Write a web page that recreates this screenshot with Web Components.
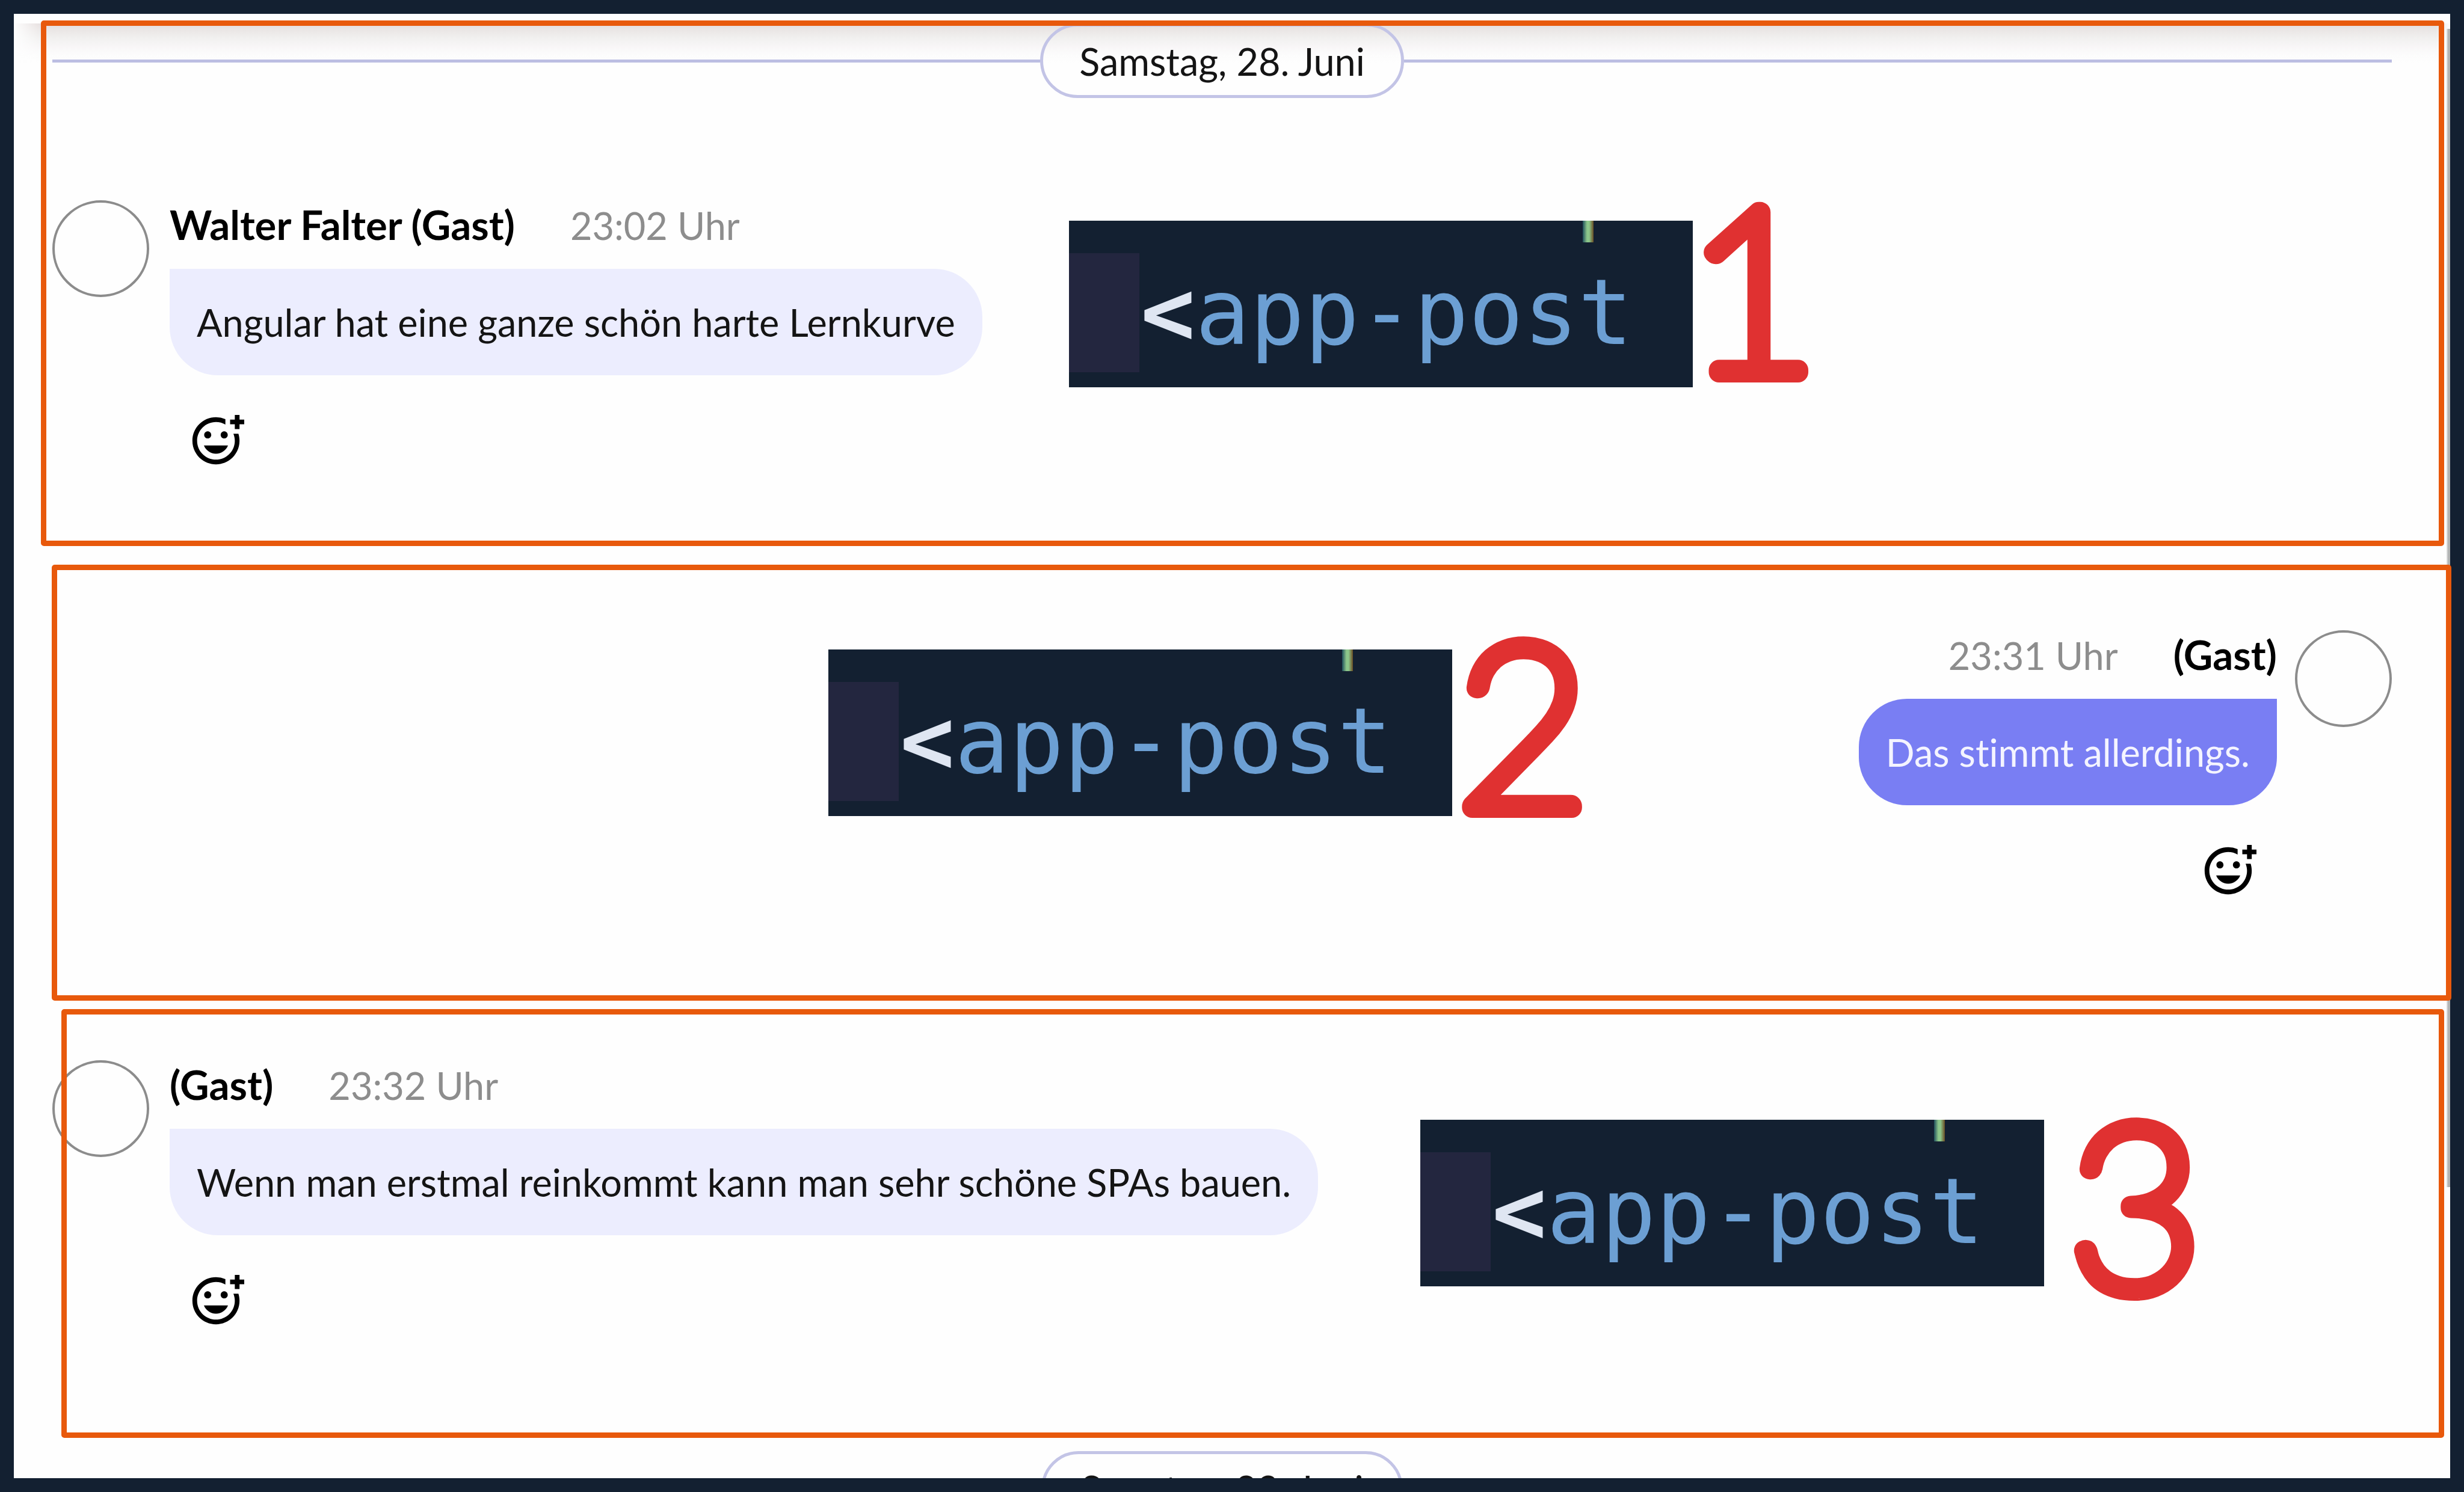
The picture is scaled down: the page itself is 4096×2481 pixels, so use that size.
<!DOCTYPE html>
<html lang="de">
<head>
<meta charset="utf-8">
<title>Chat-Verlauf</title>
<style>
  body { margin: 0; background: #132031; font: 400 63px/80px Lato, "Noto Sans", sans-serif; font-variant-ligatures: none; color: #141414; }
</style>
</head>
<body>
<chat-page>
  <day-divider>Samstag, 28. Juni</day-divider>
  <chat-post name="Walter Falter (Gast)" time="23:02 Uhr">Angular hat eine ganze schön harte Lernkurve</chat-post>
  <chat-post own name="(Gast)" time="23:31 Uhr">Das stimmt allerdings.</chat-post>
  <chat-post name="(Gast)" time="23:32 Uhr">Wenn man erstmal reinkommt kann man sehr schöne SPAs bauen.</chat-post>
  <day-divider>Sonntag, 29. Juni</day-divider>

  <note-frame slot="notes" style="left:68px;right:33px;top:34px;height:874px"></note-frame>
  <note-frame slot="notes" style="left:86px;right:21px;top:939px;height:725px"></note-frame>
  <note-frame slot="notes" style="left:102px;right:33px;top:1678px;height:713px"></note-frame>

  <code-snippet slot="notes" style="left:1777px;top:367px">app-post</code-snippet>
  <code-snippet slot="notes" style="left:1377px;top:1080px">app-post</code-snippet>
  <code-snippet slot="notes" style="left:2361px;top:1862px">app-post</code-snippet>

  <step-number slot="notes" style="left:2804px;top:337px">1</step-number>
  <step-number slot="notes" style="left:2422px;top:1061px">2</step-number>
  <step-number slot="notes" style="left:3440px;top:1861px">3</step-number>
</chat-page>

<script>
const define = (name, html, setup) => customElements.define(name, class extends HTMLElement {
  constructor() {
    super();
    this.attachShadow({ mode: 'open' }).innerHTML = html;
  }
  connectedCallback() { if (setup) setup(this, this.shadowRoot); }
});

define('chat-page', `
  <style>
    :host { display: flex; position: relative; box-sizing: border-box; height: 100vh; padding: 23px; overflow: hidden; }
    main { flex: 1; min-width: 0; position: relative; box-sizing: border-box; overflow: hidden; padding-top: 16px; background: #fefefe; }
    .thread {
      padding: 0 97px 0 64px;
      background:
        linear-gradient(to right, #fefefe, #fefefe00 50px),
        linear-gradient(to left, #fefefe, #fefefe00 24px),
        linear-gradient(#e4dcdc, #ebe7e6 12px, #f1f0ef 24px, #f8f6f7 38px, #fcfcfc 52px, #fefefe 68px);
    }
    .scroll { position: absolute; right: 0; top: 25px; width: 6px; height: 1926px; background: linear-gradient(to right, #e6e6e6, #b0b2b2 3px); }
  </style>
  <main><div class="thread"><slot></slot></div><div class="scroll"></div></main>
  <slot name="notes"></slot>`);

define('day-divider', `
  <style>
    :host { display: flex; align-items: center; margin-bottom: 105px; }
    :host::before, :host::after { content: ""; flex: 1; height: 5px; background: #bcbee2; }
    time { padding: 18px 60px 16px; border: 5px solid #c3c4e6; border-radius: 62px; }
  </style>
  <time><slot></slot></time>`);

define('chat-post', `
  <style>
    :host { display: flex; align-items: flex-start; gap: 34px; padding: 65px 0 203px; }
    :host([own]) { flex-direction: row-reverse; gap: 30px; }
    .avatar { box-sizing: border-box; width: 161px; height: 161px; border: 4px solid #8c8c8c; border-radius: 50%; }
    .body { display: flex; flex-direction: column; align-items: flex-start; }
    :host([own]) .body { align-items: flex-end; }
    header { display: flex; align-items: baseline; gap: 92px; height: 80px; margin-bottom: 34px; }
    :host([own]) header { flex-direction: row-reverse; }
    b { font-size: 67px; color: #000; }
    time { color: #8d8d8d; }
    p { margin: 0 0 62px; padding: 49px 45px 48px; border-radius: 0 80px 80px 80px; background: #ecedfe; }
    :host([own]) p { border-radius: 80px 0 80px 80px; background: #797ef3; color: #f4f4ff; }
    button { display: block; margin: 0 30px; padding: 0; border: 0; background: none; color: #000; }
    :host([own]) button { margin: 0 34px; }
    svg { display: block; width: 94px; height: 94px; fill: currentColor; }
  </style>
  <div class="avatar"></div>
  <div class="body">
    <header><b></b><time></time></header>
    <p><slot></slot></p>
    <button type="button" aria-label="Reaktion">
      <svg viewBox="0 0 24 24"><path d="M7 9.5C7 8.67 7.67 8 8.5 8s1.5.67 1.5 1.5S9.33 11 8.5 11 7 10.33 7 9.5zm5 8c2.33 0 4.31-1.46 5.11-3.5H6.89c.8 2.04 2.78 3.5 5.11 3.5zm3.5-6.5c.83 0 1.5-.67 1.5-1.5S16.33 8 15.5 8 14 8.67 14 9.5s.67 1.5 1.5 1.5zM22 1h-2v2h-2v2h2v2h2V5h2V3h-2V1zm-2 11c0 4.42-3.58 8-8 8s-8-3.58-8-8 3.58-8 8-8c1.46 0 2.82.4 4 1.08V2.84A9.93 9.93 0 0 0 11.99 2C6.47 2 2 6.48 2 12s4.47 10 9.99 10C17.52 22 22 17.52 22 12c0-1.05-.17-2.05-.47-3h-2.13c.38.93.6 1.94.6 3z"/></svg>
    </button>
  </div>`, (el, root) => {
    root.querySelector('b').textContent = el.getAttribute('name');
    root.querySelector('time').textContent = el.getAttribute('time');
  });

define('note-frame', `
  <style>:host { position: absolute; box-sizing: border-box; border: 9px solid #e8590c; border-radius: 5px; }</style>`);

define('code-snippet', `
  <style>
    :host { position: absolute; display: block; width: 1037px; height: 277px; background: #132031; }
    .line { display: flex; align-items: stretch; height: 198px; padding-top: 54px; }
    .indent { width: 117px; background: #23263f; margin-right: 2px; }
    code { font: 151px/198px "DejaVu Sans Mono", monospace; color: #6c9fd3; }
    b { color: #dfe6f2; }
    .above { position: absolute; left: 854px; top: 0; width: 18px; height: 36px; background: linear-gradient(to right, #1f4f5c, #8cc68a 40%, #8cc68a 60%, #6a4d24); }
  </style>
  <div class="above"></div>
  <div class="line"><div class="indent"></div><code><b>&lt;</b><slot></slot></code></div>`);

define('step-number', `
  <style>
    :host { position: absolute; display: block; }
    svg { display: block; width: 240px; height: 298px; overflow: visible; }
    text { font: 100 378px Lato, sans-serif; fill: #e03131; stroke: #e03131; stroke-width: 34px; stroke-linejoin: round; }
  </style>
  <svg viewBox="0 0 240 298"><text x="0" y="282"></text></svg>`, (el, root) => {
    root.querySelector('text').textContent = el.textContent;
  });
</script>
</body>
</html>
